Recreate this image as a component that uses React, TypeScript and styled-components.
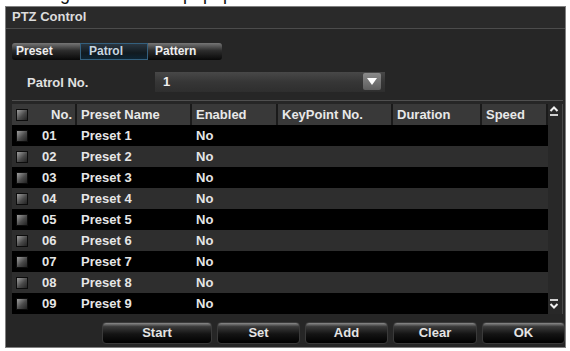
import styled, { createGlobalStyle } from 'styled-components';

const GlobalStyle = createGlobalStyle`
  html, body {
    margin: 0;
    padding: 0;
    background: #ffffff;
  }
  body {
    font-family: "Liberation Sans", Arial, sans-serif;
  }
`;

const Page = styled.div`
  width: 570px;
  height: 351px;
  overflow: hidden;
  background: #ffffff;
`;

const Caption = styled.div`
  height: 6px;
  overflow: hidden;
  font-size: 18px;
  line-height: 20px;
  color: #111;
  white-space: nowrap;
`;

const CaptionText = styled.div`
  margin-top: -16px;
  padding-left: 45px;
`;

const Window = styled.div`
  box-sizing: border-box;
  margin-left: 5px;
  width: 561px;
  height: 342px;
  border: 1px solid #808080;
  background: #262626;
  color: #e6e6e6;
  font-weight: bold;
  font-size: 13px;
`;

const TitleBar = styled.div`
  box-sizing: border-box;
  height: 22px;
  line-height: 20px;
  padding-left: 6px;
  border-bottom: 1px solid #4c4c4c;
  background: #2a2a2a;
  color: #dcdcdc;
`;

const Tabs = styled.div`
  display: flex;
  margin: 14px 0 0 6px;
  width: 210px;
  height: 17px;
  border-radius: 3px;
  background: linear-gradient(#767676, #2c2c2c 45%, #080808);
  overflow: hidden;
`;

const Tab = styled.div<{ $w: number; $pad: number; $active?: boolean }>`
  box-sizing: border-box;
  width: ${({ $w }) => $w}px;
  padding-left: ${({ $pad }) => $pad}px;
  line-height: 17px;
  font-size: 12px;
  color: #eeeeee;
  ${({ $active }) =>
    $active &&
    `
    background: linear-gradient(#2a3640, #111a20 60%, #0d2433);
    border: 1px solid #34607e;
    line-height: 15px;
    color: #c8d6e0;
  `}
`;

const PatrolRow = styled.div`
  display: flex;
  align-items: center;
  margin: 12px 0 0 21px;
  height: 20px;
`;

const FieldLabel = styled.div`
  width: 128px;
  color: #e0e0e0;
`;

const Select = styled.div`
  box-sizing: border-box;
  position: relative;
  width: 230px;
  height: 20px;
  padding-left: 8px;
  line-height: 20px;
  background: linear-gradient(#484848, #363636 50%, #2e2e2e);
  color: #f0f0f0;
`;

const SelectArrow = styled.div`
  position: absolute;
  right: 4px;
  top: 1px;
  width: 18px;
  height: 17px;
  display: flex;
  align-items: center;
  justify-content: center;
  background: linear-gradient(#8a8a8a, #5e5e5e);
  border-radius: 2px;
`;

const TablePanel = styled.div`
  display: flex;
  margin: 8px 0 0 6px;
  width: 551px;
  height: 215px;
  border-top: 1px solid #505050;
  padding-top: 3px;
`;

const TableBody = styled.div`
  width: 536px;
`;

const HeaderRow = styled.div`
  display: flex;
  height: 21px;
`;

const HeaderCell = styled.div<{ $w: number; $right?: boolean; $open?: boolean }>`
  box-sizing: border-box;
  width: ${({ $w }) => $w}px;
  padding: 0 ${({ $right }) => ($right ? '3px' : '0')} 0 4px;
  line-height: 21px;
  background: #393939;
  border-right: 2px solid ${({ $open }) => ($open ? '#393939' : '#1a1a1a')};
  color: #e8e8e8;
  display: flex;
  align-items: center;
  justify-content: ${({ $right }) => ($right ? 'flex-end' : 'flex-start')};
`;

const Row = styled.div<{ $odd: boolean }>`
  display: flex;
  height: 21px;
  background: ${({ $odd }) => ($odd ? '#000000' : '#2e2e2e')};
`;

const Cell = styled.div<{ $w: number; $pad?: number }>`
  box-sizing: border-box;
  width: ${({ $w }) => $w}px;
  padding-left: ${({ $pad }) => $pad ?? 4}px;
  line-height: 21px;
  display: flex;
  align-items: center;
`;

const Check = styled.div`
  width: 10px;
  height: 10px;
  border: 1px solid #0c0c0c;
  background: linear-gradient(135deg, #a0a0a0, #4a4a4a 55%, #222);
`;

const ScrollCol = styled.div`
  box-sizing: border-box;
  width: 15px;
  height: 210px;
  display: flex;
  flex-direction: column;
  justify-content: space-between;
  align-items: center;
  padding: 1px 3px 4px 0;
  border-right: 1px solid #4a4a4a;
  background: #282828;
`;

const ButtonBar = styled.div`
  display: flex;
  justify-content: flex-end;
  gap: 5px;
  margin-top: 3px;
`;

const Button = styled.div<{ $w: number }>`
  box-sizing: border-box;
  width: ${({ $w }) => $w}px;
  height: 22px;
  line-height: 20px;
  text-align: center;
  border: 1px solid #3a3a3a;
  border-radius: 4px;
  background: linear-gradient(#8a8a8a, #3a3a3a 18%, #141414 55%, #000);
  color: #e4e4e4;
`;

const cols = [24, 41, 115, 86, 115, 89, 66];
const rows = Array.from({ length: 9 }, (_, i) => i + 1);
const buttons: [string, number][] = [
  ['Start', 110],
  ['Set', 83],
  ['Add', 83],
  ['Clear', 84],
  ['OK', 83],
];

export default function App() {
  return (
    <Page>
      <GlobalStyle />
      <Caption>
        <CaptionText>Figure 38: Patrol popup menu</CaptionText>
      </Caption>
      <Window>
        <TitleBar>PTZ Control</TitleBar>
        <Tabs>
          <Tab $w={68} $pad={4}>Preset</Tab>
          <Tab $w={68} $pad={8} $active>Patrol</Tab>
          <Tab $w={74} $pad={7}>Pattern</Tab>
        </Tabs>
        <PatrolRow>
          <FieldLabel>Patrol No.</FieldLabel>
          <Select>
            1
            <SelectArrow>
              <svg width="10" height="7" viewBox="0 0 10 7">
                <path d="M0 0 L10 0 L5 7 Z" fill="#ffffff" />
              </svg>
            </SelectArrow>
          </Select>
        </PatrolRow>
        <TablePanel>
          <TableBody>
            <HeaderRow>
              <HeaderCell $w={cols[0]} $open>
                <Check />
              </HeaderCell>
              <HeaderCell $w={cols[1]} $right>No.</HeaderCell>
              <HeaderCell $w={cols[2]}>Preset Name</HeaderCell>
              <HeaderCell $w={cols[3]}>Enabled</HeaderCell>
              <HeaderCell $w={cols[4]}>KeyPoint No.</HeaderCell>
              <HeaderCell $w={cols[5]}>Duration</HeaderCell>
              <HeaderCell $w={cols[6]}>Speed</HeaderCell>
            </HeaderRow>
            {rows.map((n) => (
              <Row key={n} $odd={n % 2 === 1}>
                <Cell $w={cols[0]}>
                  <Check />
                </Cell>
                <Cell $w={cols[1]} $pad={6}>{String(n).padStart(2, '0')}</Cell>
                <Cell $w={cols[2]}>Preset {n}</Cell>
                <Cell $w={cols[3]}>No</Cell>
                <Cell $w={cols[4]} />
                <Cell $w={cols[5]} />
                <Cell $w={cols[6]} />
              </Row>
            ))}
          </TableBody>
          <ScrollCol>
            <svg width="10" height="12" viewBox="0 0 10 12">
              <path d="M1.5 6 L5 2.5 L8.5 6" stroke="#f0f0f0" strokeWidth="2" fill="none" />
              <rect x="1" y="9" width="8" height="2" fill="#d0d0d0" />
            </svg>
            <svg width="10" height="12" viewBox="0 0 10 12">
              <rect x="1" y="1" width="8" height="2" fill="#d0d0d0" />
              <path d="M1.5 6 L5 9.5 L8.5 6" stroke="#f0f0f0" strokeWidth="2" fill="none" />
            </svg>
          </ScrollCol>
        </TablePanel>
        <ButtonBar>
          {buttons.map(([label, w]) => (
            <Button key={label} $w={w}>
              {label}
            </Button>
          ))}
        </ButtonBar>
      </Window>
    </Page>
  );
}
